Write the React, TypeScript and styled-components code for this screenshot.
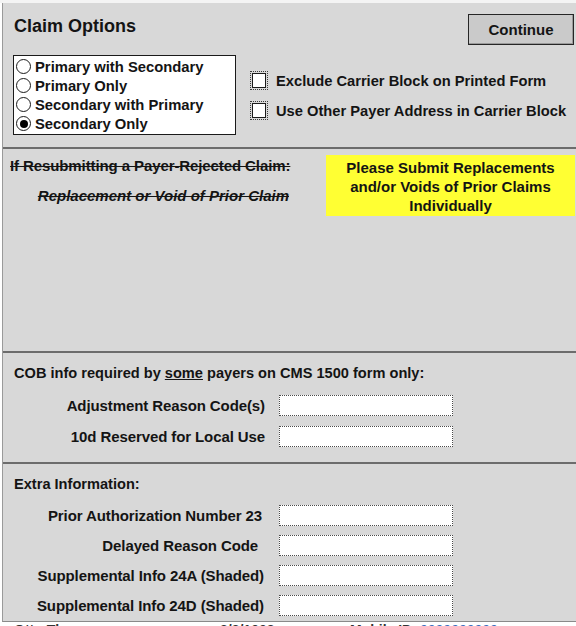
import React from "react";
import styled, { createGlobalStyle } from "styled-components";

const GlobalStyle = createGlobalStyle`
  html, body { margin: 0; padding: 0; background: #ffffff; }
  body { font-family: "Liberation Sans", Arial, sans-serif; color: #141414; }
  * { box-sizing: border-box; }
`;

const Page = styled.div`
  width: 576px;
  height: 626px;
  overflow: hidden;
  background: #ffffff;
`;

const TopStrip = styled.div`
  height: 3px;
  background: #f4f4f4;
`;

const Panel = styled.div`
  margin-left: 2px;
  background: #d8d8d8;
  border-left: 1px solid #9a9a9a;
  border-bottom: 1px solid #8a8a8a;
`;

const Section = styled.div<{ $h: number; $divider?: boolean }>`
  height: ${(p) => p.$h}px;
  border-top: ${(p) => (p.$divider ? "2px solid #6c6c6c" : "none")};
`;

const Header = styled.div`
  display: flex;
  justify-content: space-between;
  align-items: flex-start;
  padding: 11px 2px 0 11px;
`;

const Title = styled.div`
  font-size: 18px;
  font-weight: bold;
  margin-top: 2px;
`;

const Button = styled.button`
  width: 106px;
  height: 31px;
  background: #cacaca;
  border: 1px solid #262626;
  box-shadow: inset -1px -1px 0 #9a9a9a;
  font-family: "Liberation Sans", Arial, sans-serif;
  font-weight: bold;
  font-size: 15px;
  color: #141414;
  padding: 0;
`;

const Body = styled.div`
  display: flex;
  padding: 10px 0 0 10px;
`;

const RadioBox = styled.div`
  width: 223px;
  height: 80px;
  background: #ffffff;
  border: 1px solid #1a1a1a;
  padding: 1px 0 0 2px;
  display: flex;
  flex-direction: column;
`;

const RadioRow = styled.div`
  height: 19px;
  display: flex;
  align-items: center;
  gap: 4px;
  font-size: 14.8px;
  font-weight: bold;
  white-space: nowrap;
`;

const RadioCircle = styled.span<{ $on?: boolean }>`
  width: 15px;
  height: 15px;
  border-radius: 50%;
  border: 1.5px solid #1a1a1a;
  background: #ffffff;
  display: inline-flex;
  align-items: center;
  justify-content: center;
  flex: none;
  &::after {
    content: "";
    width: 8px;
    height: 8px;
    border-radius: 50%;
    background: #000;
    display: ${(p) => (p.$on ? "block" : "none")};
  }
`;

const CheckCol = styled.div`
  display: flex;
  flex-direction: column;
  gap: 11px;
  padding: 16px 0 0 14px;
`;

const CheckRow = styled.div`
  display: flex;
  align-items: center;
  gap: 8px;
  font-size: 14.7px;
  font-weight: bold;
  white-space: nowrap;
  height: 19px;
`;

const CheckFocus = styled.span`
  width: 18px;
  height: 19px;
  border: 1px dotted #3a3a3a;
  display: inline-flex;
  align-items: center;
  justify-content: center;
  flex: none;
`;

const CheckBox = styled.span`
  width: 14px;
  height: 15px;
  background: #ffffff;
  border: 1px solid #1a1a1a;
`;

const ResubmitRow = styled.div`
  display: flex;
  justify-content: space-between;
  padding: 6px 1px 0 7px;
`;

const StruckCol = styled.div`
  display: flex;
  flex-direction: column;
  gap: 13px;
  padding-top: 2px;
  width: 285px;
`;

const Struck = styled.div<{ $italic?: boolean }>`
  font-size: 15px;
  font-weight: bold;
  text-decoration: line-through;
  font-style: ${(p) => (p.$italic ? "italic" : "normal")};
  letter-spacing: ${(p) => (p.$italic ? "0px" : "-0.1px")};
  white-space: nowrap;
  align-self: ${(p) => (p.$italic ? "flex-end" : "flex-start")};
  margin-right: ${(p) => (p.$italic ? "6px" : "0")};
`;

const Notice = styled.div`
  width: 249px;
  height: 61px;
  background: #ffff33;
  font-size: 15px;
  font-weight: bold;
  line-height: 19px;
  text-align: center;
  padding-top: 3px;
`;

const SectionLabel = styled.div`
  font-size: 14.6px;
  font-weight: bold;
  padding: 12px 0 0 11px;
  white-space: nowrap;
`;

const Under = styled.span`
  text-decoration: underline;
`;

const FormGrid = styled.div<{ $gap: number; $top: number }>`
  display: grid;
  grid-template-columns: 262px 174px;
  column-gap: 14px;
  row-gap: ${(p) => p.$gap}px;
  padding-top: ${(p) => p.$top}px;
`;

const FieldLabel = styled.div<{ $inset?: number }>`
  font-size: 15px;
  font-weight: bold;
  letter-spacing: -0.1px;
  text-align: right;
  white-space: nowrap;
  align-self: center;
  padding-right: ${(p) => p.$inset ?? 0}px;
`;

const Field = styled.div`
  height: 21px;
  background: #ffffff;
  border: 1px dotted #4a4a4a;
`;

const BottomStrip = styled.div`
  height: 4px;
  overflow: hidden;
  display: flex;
  font-size: 14px;
  line-height: 17px;
  white-space: nowrap;
`;

const StripText = styled.span<{ $w: number; $blue?: boolean }>`
  width: ${(p) => p.$w}px;
  color: ${(p) => (p.$blue ? "#3a6fbf" : "#333")};
  font-weight: bold;
`;

export default function App() {
  return (
    <Page>
      <GlobalStyle />
      <TopStrip />
      <Panel>
        <Section $h={144}>
          <Header>
            <Title>Claim Options</Title>
            <Button>Continue</Button>
          </Header>
          <Body>
            <RadioBox>
              <RadioRow><RadioCircle />Primary with Secondary</RadioRow>
              <RadioRow><RadioCircle />Primary Only</RadioRow>
              <RadioRow><RadioCircle />Secondary with Primary</RadioRow>
              <RadioRow><RadioCircle $on />Secondary Only</RadioRow>
            </RadioBox>
            <CheckCol>
              <CheckRow><CheckFocus><CheckBox /></CheckFocus>Exclude Carrier Block on Printed Form</CheckRow>
              <CheckRow><CheckFocus><CheckBox /></CheckFocus>Use Other Payer Address in Carrier Block</CheckRow>
            </CheckCol>
          </Body>
        </Section>
        <Section $h={204} $divider>
          <ResubmitRow>
            <StruckCol>
              <Struck>If Resubmitting a Payer-Rejected Claim:</Struck>
              <Struck $italic>Replacement or Void of Prior Claim</Struck>
            </StruckCol>
            <Notice>
              Please Submit Replacements
              <br />
              and/or Voids of Prior Claims
              <br />
              Individually
            </Notice>
          </ResubmitRow>
        </Section>
        <Section $h={111} $divider>
          <SectionLabel>
            COB info required by <Under>some</Under> payers on CMS 1500 form only:
          </SectionLabel>
          <FormGrid $gap={10} $top={14}>
            <FieldLabel>Adjustment Reason Code(s)</FieldLabel>
            <Field />
            <FieldLabel>10d Reserved for Local Use</FieldLabel>
            <Field />
          </FormGrid>
        </Section>
        <Section $h={159} $divider>
          <SectionLabel>Extra Information:</SectionLabel>
          <FormGrid $gap={9} $top={13}>
            <FieldLabel $inset={3}>Prior Authorization Number 23</FieldLabel>
            <Field />
            <FieldLabel $inset={7}>Delayed Reason Code</FieldLabel>
            <Field />
            <FieldLabel $inset={1}>Supplemental Info 24A (Shaded)</FieldLabel>
            <Field />
            <FieldLabel $inset={1}>Supplemental Info 24D (Shaded)</FieldLabel>
            <Field />
          </FormGrid>
        </Section>
      </Panel>
      <BottomStrip>
        <StripText $w={14} />
        <StripText $w={206}>Otto Thomas</StripText>
        <StripText $w={130}>3/3/1908</StripText>
        <StripText $w={70}>Mobile ID</StripText>
        <StripText $w={100} $blue>0000000000</StripText>
      </BottomStrip>
    </Page>
  );
}
